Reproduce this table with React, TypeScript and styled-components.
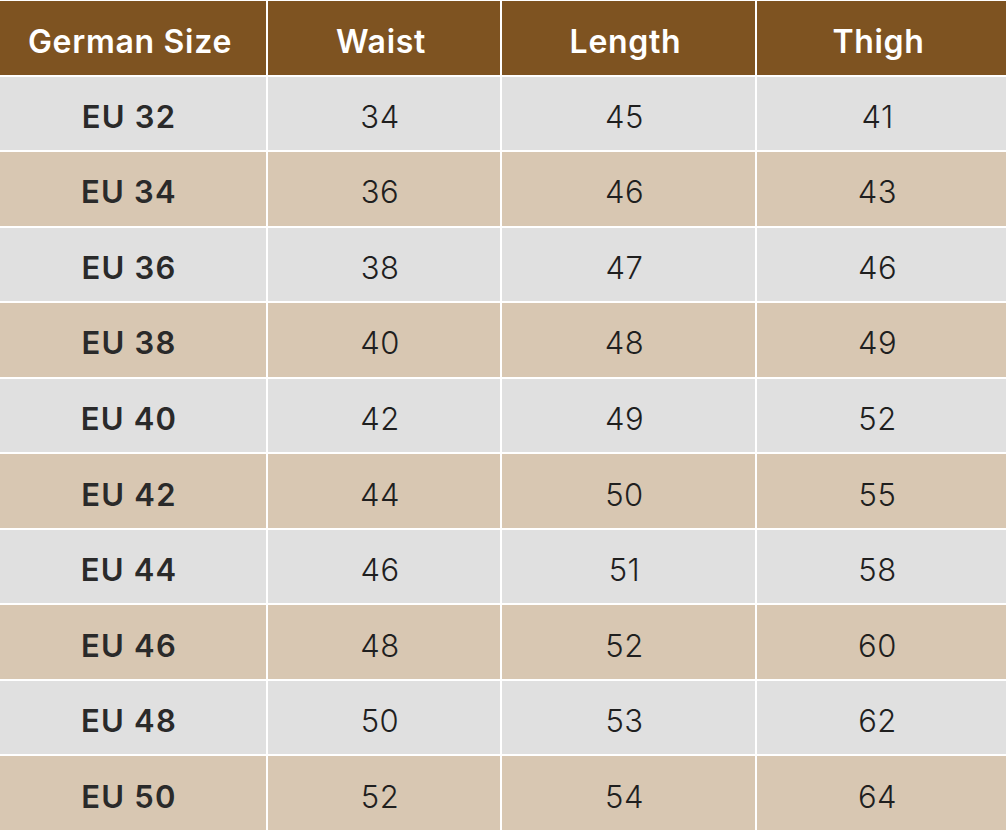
import React from "react";
import styled, { createGlobalStyle } from "styled-components";

const GlobalStyle = createGlobalStyle`
    html, body {
        margin: 0;
        padding: 0;
        background: #ffffff;
    }
    body {
        font-family: Inter, "Open Sans", "Liberation Sans", sans-serif;
    }
`;

const headers = ["German Size", "Waist", "Length", "Thigh"];

const rows = [
    ["EU 32", "34", "45", "41"],
    ["EU 34", "36", "46", "43"],
    ["EU 36", "38", "47", "46"],
    ["EU 38", "40", "48", "49"],
    ["EU 40", "42", "49", "52"],
    ["EU 42", "44", "50", "55"],
    ["EU 44", "46", "51", "58"],
    ["EU 46", "48", "52", "60"],
    ["EU 48", "50", "53", "62"],
    ["EU 50", "52", "54", "64"],
];

const App = () => {
    return (
        <>
            <GlobalStyle />
            <Table>
                {headers.map((h) => (
                    <HeadCell key={h}>{h}</HeadCell>
                ))}
                {rows.map((row, i) =>
                    row.map((value, j) => (
                        <Cell key={`${i}-${j}`} $tan={i % 2 === 1} $bold={j === 0}>
                            {value}
                        </Cell>
                    ))
                )}
            </Table>
        </>
    );
};

export default App;

const Table = styled.div`
    display: grid;
    grid-template-columns: 266px 232px 253px 1fr;
    grid-template-rows: repeat(11, 1fr);
    gap: 2px;
    width: 1008px;
    height: 830px;
    padding: 1px 2px 0 0;
    box-sizing: border-box;
    background: #ffffff;
`;

const HeadCell = styled.div`
    display: flex;
    align-items: center;
    justify-content: center;
    padding: 7px 6px 0 0;
    background: #7e5321;
    color: #ffffff;
    font-size: 32px;
    font-weight: 600;
    letter-spacing: 0.7px;
`;

const Cell = styled.div<{ $tan: boolean; $bold: boolean }>`
    display: flex;
    align-items: center;
    justify-content: center;
    padding: 6px 8px 0 0;
    background: ${({ $tan }) => ($tan ? "#d8c7b2" : "#e0e0e0")};
    color: ${({ $bold }) => ($bold ? "#2a2a2a" : "#1f1f1f")};
    font-size: 31px;
    font-weight: ${({ $bold }) => ($bold ? 600 : 300)};
    letter-spacing: ${({ $bold }) => ($bold ? "1.2px" : "0.5px")};
`;
